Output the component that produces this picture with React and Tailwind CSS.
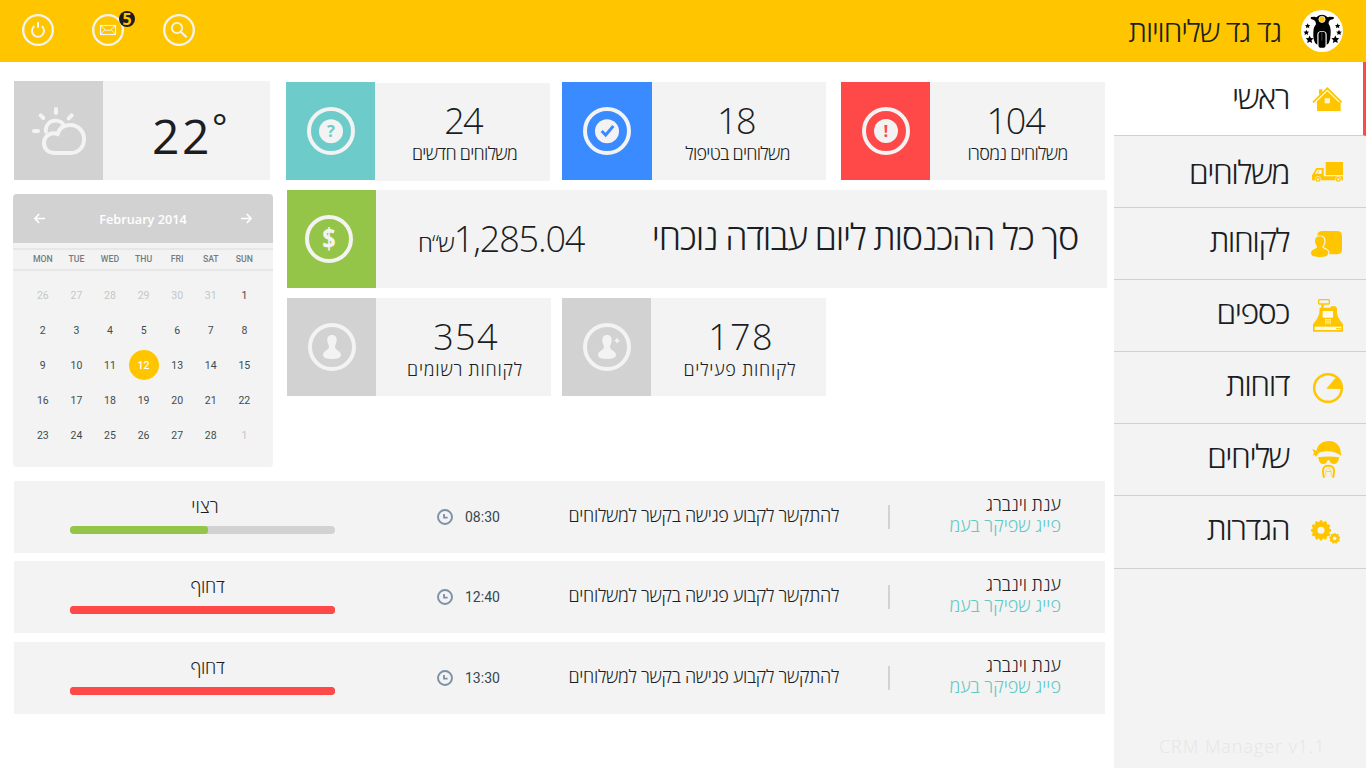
import React from 'react';

const weekdays = ['MON', 'TUE', 'WED', 'THU', 'FRI', 'SAT', 'SUN'];
const weeks = [
  [26, 27, 28, 29, 30, 31, 1],
  [2, 3, 4, 5, 6, 7, 8],
  [9, 10, 11, 12, 13, 14, 15],
  [16, 17, 18, 19, 20, 21, 22],
  [23, 24, 25, 26, 27, 28, 1],
];

function gear(cx, cy, outer, inner, teeth) {
  const pts = [];
  const step = (Math.PI * 2) / teeth;
  for (let i = 0; i < teeth; i++) {
    const a = i * step - Math.PI / 2;
    [[-0.36, inner], [-0.2, outer], [0.2, outer], [0.36, inner]].forEach(([o, r]) => {
      pts.push(`${(cx + r * Math.cos(a + o * step)).toFixed(1)},${(cy + r * Math.sin(a + o * step)).toFixed(1)}`);
    });
  }
  return pts.join(' ');
}

function star(cx, cy, r) {
  const pts = [];
  for (let i = 0; i < 10; i++) {
    const a = (i * Math.PI) / 5 - Math.PI / 2;
    const q = i % 2 ? r * 0.48 : r;
    pts.push(`${(cx + q * Math.cos(a)).toFixed(1)},${(cy + q * Math.sin(a)).toFixed(1)}`);
  }
  return pts.join(' ');
}

function Logo() {
  return (
    <svg className="size-[42px] shrink-0" viewBox="573 30 126 126">
      <circle cx="636" cy="93" r="63" fill="#fff" />
      <g fill="#000">
        <path d="M603 51 L615 50 Q619 54 623 49 Q627 44 636 44 Q645 44 649 49 Q653 54 657 50 L671 51 Q674 56 668 58 L660 60 Q654 66 656 72 Q663 82 662 100 Q662 118 656 130 L650 134 L650 104 Q650 93 636 93 Q622 93 622 104 L622 134 L616 130 Q609 118 610 98 Q610 82 618 73 Q619 65 612 60 L605 58 Q600 56 603 51 Z" />
        <rect x="625.5" y="95.5" width="21" height="48" rx="8" />
        <polygon points={star(593, 78, 8.5)} />
        <polygon points={star(589, 98, 9)} />
        <polygon points={star(599, 119, 12.5)} />
        <polygon points={star(683, 78, 8.5)} />
        <polygon points={star(687, 98, 9)} />
        <polygon points={star(676, 119, 12.5)} />
      </g>
      <path d="M635.5 97 V122" stroke="#888" strokeWidth="1.5" />
      <circle cx="636" cy="58" r="9.5" fill="#ffc600" stroke="#fff" strokeWidth="2" />
    </svg>
  );
}

function HouseIcon() {
  return (
    <svg className="h-[72px] w-8" viewBox="603 186 96 216" fill="#ffc600">
      <path d="M627 285 V268 H637 V278 Z" />
      <path d="M609 307 L652 265 L695 307" fill="none" stroke="#ffc600" strokeWidth="5.5" />
      <path d="M652 274 L686 307 H692 V333 H621 V307 H618 Z" />
      <rect x="645" y="296" width="14" height="13" fill="#fff3c4" stroke="#fff" strokeWidth="1.5" />
    </svg>
  );
}

function TruckIcon() {
  return (
    <svg className="h-[72px] w-8" viewBox="603 408 96 216" fill="#ffc600">
      <rect x="647" y="486" width="52" height="39" />
      <path d="M619 504 H641 V529 H699 V541 H606 V525 L610 520 Z" />
      <path d="M622 509 H635 V521 H615 Z" fill="#f3f3f3" />
      <path d="M622 521 L628 510" stroke="#ffc600" strokeWidth="2" />
      <circle cx="624" cy="538" r="9" fill="#f3f3f3" />
      <circle cx="685" cy="538" r="9" fill="#f3f3f3" />
      <circle cx="624" cy="538" r="5.5" fill="none" stroke="#ffc600" strokeWidth="4" />
      <circle cx="685" cy="538" r="5.5" fill="none" stroke="#ffc600" strokeWidth="4" />
    </svg>
  );
}

function ClientsIcon() {
  const head = 'M629 109 C639 109 644 115 643 126 C642 133 638 137 637 140 C637 147 654 147 655 157 C655 168 647 171 629 171 C611 171 603 168 603 158 C604 147 621 147 621 140 C620 136 616 133 615 126 C614 115 619 109 629 109 Z';
  return (
    <svg className="h-[72px] w-8" viewBox="603 24 96 216" fill="#ffc600">
      <rect x="622" y="93" width="74" height="70" rx="14" />
      <path d={head} stroke="#f3f3f3" strokeWidth="7" />
      <path d={head} />
    </svg>
  );
}

function RegisterIcon() {
  return (
    <svg className="h-[72px] w-8" viewBox="603 240 96 216" fill="#ffc600">
      <rect x="626" y="299" width="32" height="13" rx="2" fill="none" stroke="#ffc600" strokeWidth="4" />
      <rect x="634" y="313" width="7" height="12" />
      <path d="M629 323 H661 L664 319 H676 L681 324 V340 Q683 354 699 373 V395 H609 V373 Q626 352 628 338 Z" />
      <rect x="638" y="333" width="31" height="20" fill="#fffbe8" />
      <path d="M645 357 H663 V371 H645 Z" fill="#fff0b3" />
      <path d="M651 357 V371 M657 357 V371 M645 362 H663 M645 367 H663" stroke="#ffc600" strokeWidth="1.5" />
      <rect x="614" y="380" width="80" height="10" fill="#fffbe8" />
      <path d="M678 386 H694" stroke="#ffc600" strokeWidth="3" />
    </svg>
  );
}

function PieIcon() {
  return (
    <svg className="h-[72px] w-8" viewBox="603 -84 96 216" fill="#ffc600">
      <circle cx="654" cy="24" r="41.5" fill="none" stroke="#ffc600" strokeWidth="7.5" />
      <path d="M649 26 L679 -9 Q694 4 695 27 Z" />
    </svg>
  );
}

function BikerIcon() {
  return (
    <svg className="h-[72px] w-8" viewBox="603 132 96 216" fill="#ffc600">
      <path d="M620 212 C622 195 636 183 656 183 C680 183 694 199 693 227 C672 211 645 211 626 219 L618 231 L614 224 L608 227 L612 218 L607 207 L615 210 Z" />
      <path d="M624 232 Q656 227 688 232 L686 238 Q684 252 671 252 Q661 252 658 241 H653 Q650 252 640 252 Q628 252 626 238 Z" />
      <path d="M642 293 C636 270 638 257 655 257 C673 257 675 270 669 293" fill="none" stroke="#ffc600" strokeWidth="6" />
      <path d="M648 289 C646 276 647 265 655.5 265 C664 265 665 276 663 289" fill="none" stroke="#ffc600" strokeWidth="2" />
      <path d="M650 274 H662" stroke="#ffc600" strokeWidth="2.5" />
    </svg>
  );
}

function GearsIcon() {
  return (
    <svg className="h-[72px] w-8" viewBox="603 348 96 216" fill="#ffc600">
      <polygon points={gear(633, 451, 30.5, 26, 12)} />
      <circle cx="633" cy="451" r="10.5" fill="#f3f3f3" />
      <polygon points={gear(674, 475, 16.5, 13.5, 9)} />
      <circle cx="674" cy="475" r="5.5" fill="#f3f3f3" />
    </svg>
  );
}

const nav = [
  { label: 'ראשי', Icon: HouseIcon, row: 'h-[74px] bg-white border-r-[3px] border-r-[#ff4848] pr-5', text: 'pt-[19px]' },
  { label: 'משלוחים', Icon: TruckIcon, row: 'h-[72px] pr-[23px]', text: 'pt-[20px]' },
  { label: 'לקוחות', Icon: ClientsIcon, row: 'h-[72px] pr-[23px]', text: 'pt-[16px]' },
  { label: 'כספים', Icon: RegisterIcon, row: 'h-[72px] pr-[23px]', text: 'pt-[16px]' },
  { label: 'דוחות', Icon: PieIcon, row: 'h-[72px] pr-[23px]', text: 'pt-[16px]' },
  { label: 'שליחים', Icon: BikerIcon, row: 'h-[72px] pr-[23px]', text: 'pt-[16px]' },
  { label: 'הגדרות', Icon: GearsIcon, row: 'h-[73px] pr-[23px]', text: 'pt-[16px]' },
];

function Sidebar() {
  return (
    <aside className="flex w-[252px] shrink-0 flex-col bg-[#f3f3f3]">
      <nav>
        {nav.map(({ label, Icon, row, text }) => (
          <a key={label} className={`flex items-start justify-end gap-[22px] overflow-hidden border-b border-b-[#d0d0d0] ${row}`}>
            <span dir="rtl" className={`text-[32px] leading-[32px] font-light tracking-[-1.5px] whitespace-nowrap ${text}`}>{label}</span>
            <Icon />
          </a>
        ))}
      </nav>
      <div className="mt-auto pb-[13px] pl-[45px] text-[18px] leading-[18px] font-light tracking-[0.95px] whitespace-nowrap text-[#e4e6e8]">CRM Manager v1.1</div>
    </aside>
  );
}

function Ring({ children, className = '' }) {
  return (
    <svg className={`size-12 ${className}`} viewBox="0 0 144 144" fill="#f3f3f3">
      <circle cx="72" cy="72" r="66" fill="none" stroke="#f3f3f3" strokeWidth="12" />
      {children}
    </svg>
  );
}

const person = 'M72 36 C82 36 87 43 86 53 C86 60 82 65 81 69 C80 84 99 82 99 96 Q99 108 72 108 Q45 108 45 96 C45 82 64 84 63 69 C62 65 58 60 58 53 C57 43 62 36 72 36 Z';

function Card({ tile, icon, value, label, valueClass, labelClass, bodyClass = '' }) {
  return (
    <section className="flex h-[98px] w-[264px] shrink-0">
      <div className={`flex shrink-0 items-center justify-center ${tile}`}>{icon}</div>
      <div className={`flex h-[98px] flex-1 flex-col items-center bg-[#f3f3f3] ${bodyClass}`}>
        <div className={`text-[36px] leading-[36px] font-light whitespace-nowrap ${valueClass}`}>{value}</div>
        <div dir="rtl" className={`mt-[5px] text-[18px] leading-[18px] font-light whitespace-nowrap ${labelClass}`}>{label}</div>
      </div>
    </section>
  );
}

function Weather() {
  return (
    <section className="ml-px flex h-[99px] w-64 bg-[#f3f3f3]">
      <div className="flex w-[89px] items-center justify-center bg-[#d2d2d2]">
        <svg className="h-12 w-[54px]" viewBox="96 321 162 144" fill="none" stroke="#f3f3f3" strokeWidth="12" strokeLinecap="round">
          <path d="M168 327 V339 M122 346 L130 354 M215 346 L206 355 M102 393 H114" />
          <path d="M138 396 C134 380 146 362 166 362 C178 362 188 368 193 378" strokeWidth="11" />
          <path d="M164 459 C144 459 132 446 132 430 C132 410 150 394 173 402 C178 384 192 375 210 375 C234 375 252 393 252 417 C252 441 236 459 212 459 Z" strokeWidth="12" />
        </svg>
      </div>
      <div className="flex items-start pt-[31px] pl-[49px] text-[48px] leading-[48px]">
        <span className="tracking-[2.6px]">22</span>
        <span className="-mt-[3px] text-[36px] leading-[36px]">°</span>
      </div>
    </section>
  );
}

function Calendar() {
  return (
    <section className="mt-3.5 h-[273px] w-[260px] overflow-hidden rounded-[4px] bg-[#f3f3f3]">
      <div className="flex h-[49px] items-center justify-between bg-[#d2d2d2] px-[21px] text-white">
        <svg className="h-[11px] w-[11px]" viewBox="0 0 11 11" fill="none" stroke="#fff" strokeWidth="1.6"><path d="M11 5.5 H1 M5.2 1 L.9 5.5 L5.2 10" /></svg>
        <div className="text-[12.7px] leading-4 font-semibold">February 2014</div>
        <svg className="h-[11px] w-[11px]" viewBox="0 0 11 11" fill="none" stroke="#fff" strokeWidth="1.6"><path d="M0 5.5 H10 M5.8 1 L10.1 5.5 L5.8 10" /></svg>
      </div>
      <div className="mt-[5px] grid h-[23px] grid-cols-[repeat(7,33.6px)] items-center border-y-2 border-[#e7e7e7] pl-[13px] text-center font-['Roboto',sans-serif] text-[8.7px] leading-[9px] font-medium text-[#757c7e]">
        {weekdays.map((d) => <span key={d}>{d}</span>)}
      </div>
      <div className="mt-1.5 grid auto-rows-[35px] grid-cols-[repeat(7,33.6px)] pl-[13px] font-['Roboto',sans-serif] text-[10.5px] leading-[16px] text-[#414b4e]">
        {weeks.flatMap((week, w) => week.map((day, d) => {
          const muted = (w === 0 && day > 20) || (w === 4 && day === 1);
          const today = day === 12;
          return (
            <span key={`${w}-${d}`} className="flex items-center justify-center">
              <span className={`flex size-[30px] items-start justify-center rounded-full pt-2 ${today ? 'bg-[#ffc600] font-medium text-white' : ''} ${muted ? 'text-[#c4c7c8]' : ''}`}>{day}</span>
            </span>
          );
        }))}
      </div>
    </section>
  );
}

function Revenue() {
  return (
    <section className="mt-2.5 ml-px flex h-[98px] w-[820px] bg-[#f3f3f3]">
      <div className="flex w-[89px] shrink-0 items-center justify-center bg-[#95c548] pr-[5px]">
        <Ring><text x="0" y="0" textAnchor="middle" fontSize="83" fontWeight="700" transform="translate(72 102) scale(0.85 1)">$</text></Ring>
      </div>
      <div className="flex flex-1 items-start justify-between pr-[29px] pl-[42px]">
        <div className="flex items-baseline pt-[31px] font-light whitespace-nowrap">
          <span dir="rtl" className="text-[24px] leading-[24px] tracking-[-0.9px]">ש“ח</span>
          <span className="text-[36px] leading-[36px] tracking-[-1.15px]">1,285.04</span>
        </div>
        <h2 dir="rtl" className="pt-[29px] text-[36px] leading-[36px] font-light tracking-[-1.25px] whitespace-nowrap">סך כל ההכנסות ליום עבודה נוכחי</h2>
      </div>
    </section>
  );
}

function Task({ status, statusClass, time, bar, track, gap }) {
  return (
    <li className={`flex h-[72px] w-[1091px] bg-[#f3f3f3] pl-14 ${gap}`}>
      <div className="w-[265px] pt-4">
        <div dir="rtl" className={`text-center text-[18px] leading-[18px] font-light ${statusClass}`}>{status}</div>
        <div className={`mt-[11px] h-2 overflow-hidden rounded-full ${track}`}>
          <div className={`h-2 rounded-r-[3px] ${bar}`} />
        </div>
      </div>
      <div className="ml-[102px] flex w-16 items-start gap-3 pt-7">
        <svg className="size-4 shrink-0" viewBox="0 0 16 16" fill="none" stroke="#7b8fa6">
          <circle cx="8" cy="8" r="7" strokeWidth="1.9" />
          <path d="M7 5 V8.7 H10.6" strokeWidth="1.8" />
        </svg>
        <time className="font-['Roboto',sans-serif] text-[14px] leading-4 text-[#37474f]">{time}</time>
      </div>
      <p dir="rtl" className="w-[338px] pt-[25px] text-[18px] leading-[18px] font-light tracking-[-0.3px] whitespace-nowrap">להתקשר לקבוע פגישה בקשר למשלוחים</p>
      <div className="mt-6 ml-[49px] h-6 w-0.5 bg-[#d2d2d2]" />
      <div dir="rtl" className="w-[171px] pt-3.5 text-[18px] leading-[18px] font-light whitespace-nowrap">
        <div>ענת וינברג</div>
        <div className="mt-[3px] text-[#5fc9c4]">פייג שפיקר בעמ</div>
      </div>
    </li>
  );
}

function Header() {
  return (
    <header className="flex h-[62px] items-start bg-[#ffc600]">
      <div className="flex pt-3.5 pl-[22px]">
        <button className="size-8">
          <svg className="size-8" viewBox="66 42 96 96" fill="none" stroke="#f3f3f3">
            <circle cx="114" cy="90" r="44.5" strokeWidth="7" />
            <path d="M103 78 A18 18 0 1 0 125 78" strokeWidth="6" />
            <path d="M114 66 V83" strokeWidth="6" />
          </svg>
        </button>
        <button className="relative ml-[38px] size-8">
          <svg className="size-8" viewBox="276 42 96 96" fill="none" stroke="#f3f3f3">
            <circle cx="324" cy="90" r="44.5" strokeWidth="7" />
            <rect x="301.5" y="76.5" width="45" height="27" strokeWidth="3.5" />
            <path d="M303 78 L319 92 Q324 88 329 92 L345 78 M303 102 L315 89 M345 102 L333 89" strokeWidth="3" />
          </svg>
          <span className="absolute -top-[3px] left-[27px] flex size-4 items-center justify-center rounded-full bg-[#1d1d1b] text-[16px] leading-4 font-bold text-[#ffc600]">5</span>
        </button>
        <button className="ml-[39px] size-8">
          <svg className="size-8" viewBox="489 42 96 96" fill="none" stroke="#f3f3f3">
            <circle cx="537" cy="90" r="44.5" strokeWidth="7" />
            <circle cx="531" cy="84" r="15.5" strokeWidth="5.5" />
            <path d="M543 96 L560 112" strokeWidth="6.5" />
          </svg>
        </button>
      </div>
      <div className="ml-auto flex items-start gap-5 pt-2.5 pr-[23px]">
        <h1 dir="rtl" className="pt-1.5 text-[30px] leading-[30px] font-light tracking-[-1.1px] whitespace-nowrap">גד גד שליחויות</h1>
        <Logo />
      </div>
    </header>
  );
}

export default function App() {
  return (
    <div className="flex h-[768px] w-[1366px] flex-col overflow-hidden bg-white font-['Open_Sans',sans-serif] text-[#1a1e23]">
      <Header />
      <div className="flex flex-1">
        <main className="w-[1114px] shrink-0 pt-[19px] pl-[13px]">
          <div className="flex h-[400px]">
            <div className="w-[260px] shrink-0">
              <Weather />
              <Calendar />
            </div>
            <div className="ml-[13px] pt-px">
              <div className="flex">
                <Card
                  tile="w-[89px] bg-[#6dcbc9]"
                  bodyClass="mt-px pl-1 -mb-px pt-5"
                  icon={<Ring><circle cx="72" cy="73" r="36" /><text x="72" y="90" textAnchor="middle" fontSize="50" fontWeight="700" fill="#6dcbc9">?</text></Ring>}
                  value="24" label="משלוחים חדשים" valueClass="pr-[3px] tracking-[-1.8px]" labelClass="tracking-[-0.7px]"
                />
                <div className="ml-3">
                  <Card
                    tile="w-[90px] bg-[#3a8bff]"
                    bodyClass="pr-[3px] pt-[21px]"
                    icon={<Ring><circle cx="72" cy="73" r="36" /><path d="M56 72 L68 84 L91 57" fill="none" stroke="#3a8bff" strokeWidth="9" /></Ring>}
                    value="18" label="משלוחים בטיפול" valueClass="pr-[3px] tracking-[-1.5px]" labelClass="tracking-[-0.7px]"
                  />
                </div>
                <div className="ml-[15px]">
                  <Card
                    tile="w-[89px] bg-[#ff4848]"
                    bodyClass="pt-[21px]"
                    icon={<Ring><circle cx="72" cy="72" r="36" /><text x="72" y="90" textAnchor="middle" fontSize="50" fontWeight="700" fill="#ff4848">!</text></Ring>}
                    value="104" label="משלוחים נמסרו" valueClass="pr-[4px] tracking-[-1.2px]" labelClass="tracking-[-0.7px]"
                  />
                </div>
              </div>
              <Revenue />
              <div className="mt-2.5 ml-px flex gap-[11px]">
                <Card
                  tile="w-[89px] bg-[#d2d2d2]"
                  bodyClass="pl-[3px] pt-[21px]"
                  icon={<Ring><path d={person} /></Ring>}
                  value="354" label="לקוחות רשומים" valueClass="pl-[2px] tracking-[1.3px]" labelClass="tracking-[0.78px]"
                />
                <Card
                  tile="w-[89px] bg-[#d2d2d2]"
                  bodyClass="pl-[3px] pt-[21px]"
                  icon={<Ring><path d={person} /><path d="M102 46 V60 M95 53 H109" stroke="#f3f3f3" strokeWidth="5" /></Ring>}
                  value="178" label="לקוחות פעילים" valueClass="pl-[2px] tracking-[1.3px]" labelClass="tracking-[0.78px]"
                />
              </div>
            </div>
          </div>
          <ul className="ml-px">
            <Task status="רצוי" statusClass="pl-[5px] tracking-[0.2px]" time="08:30" bar="w-[138px] bg-[#95c548]" track="bg-[#d2d2d2]" gap="" />
            <Task status="דחוף" statusClass="pl-[10px] tracking-[-0.3px]" time="12:40" bar="w-[265px] bg-[#ff4848]" track="bg-[#ff4848]" gap="mt-2" />
            <Task status="דחוף" statusClass="pl-[10px] tracking-[-0.3px]" time="13:30" bar="w-[265px] bg-[#ff4848]" track="bg-[#ff4848]" gap="mt-[9px]" />
          </ul>
        </main>
        <Sidebar />
      </div>
    </div>
  );
}
